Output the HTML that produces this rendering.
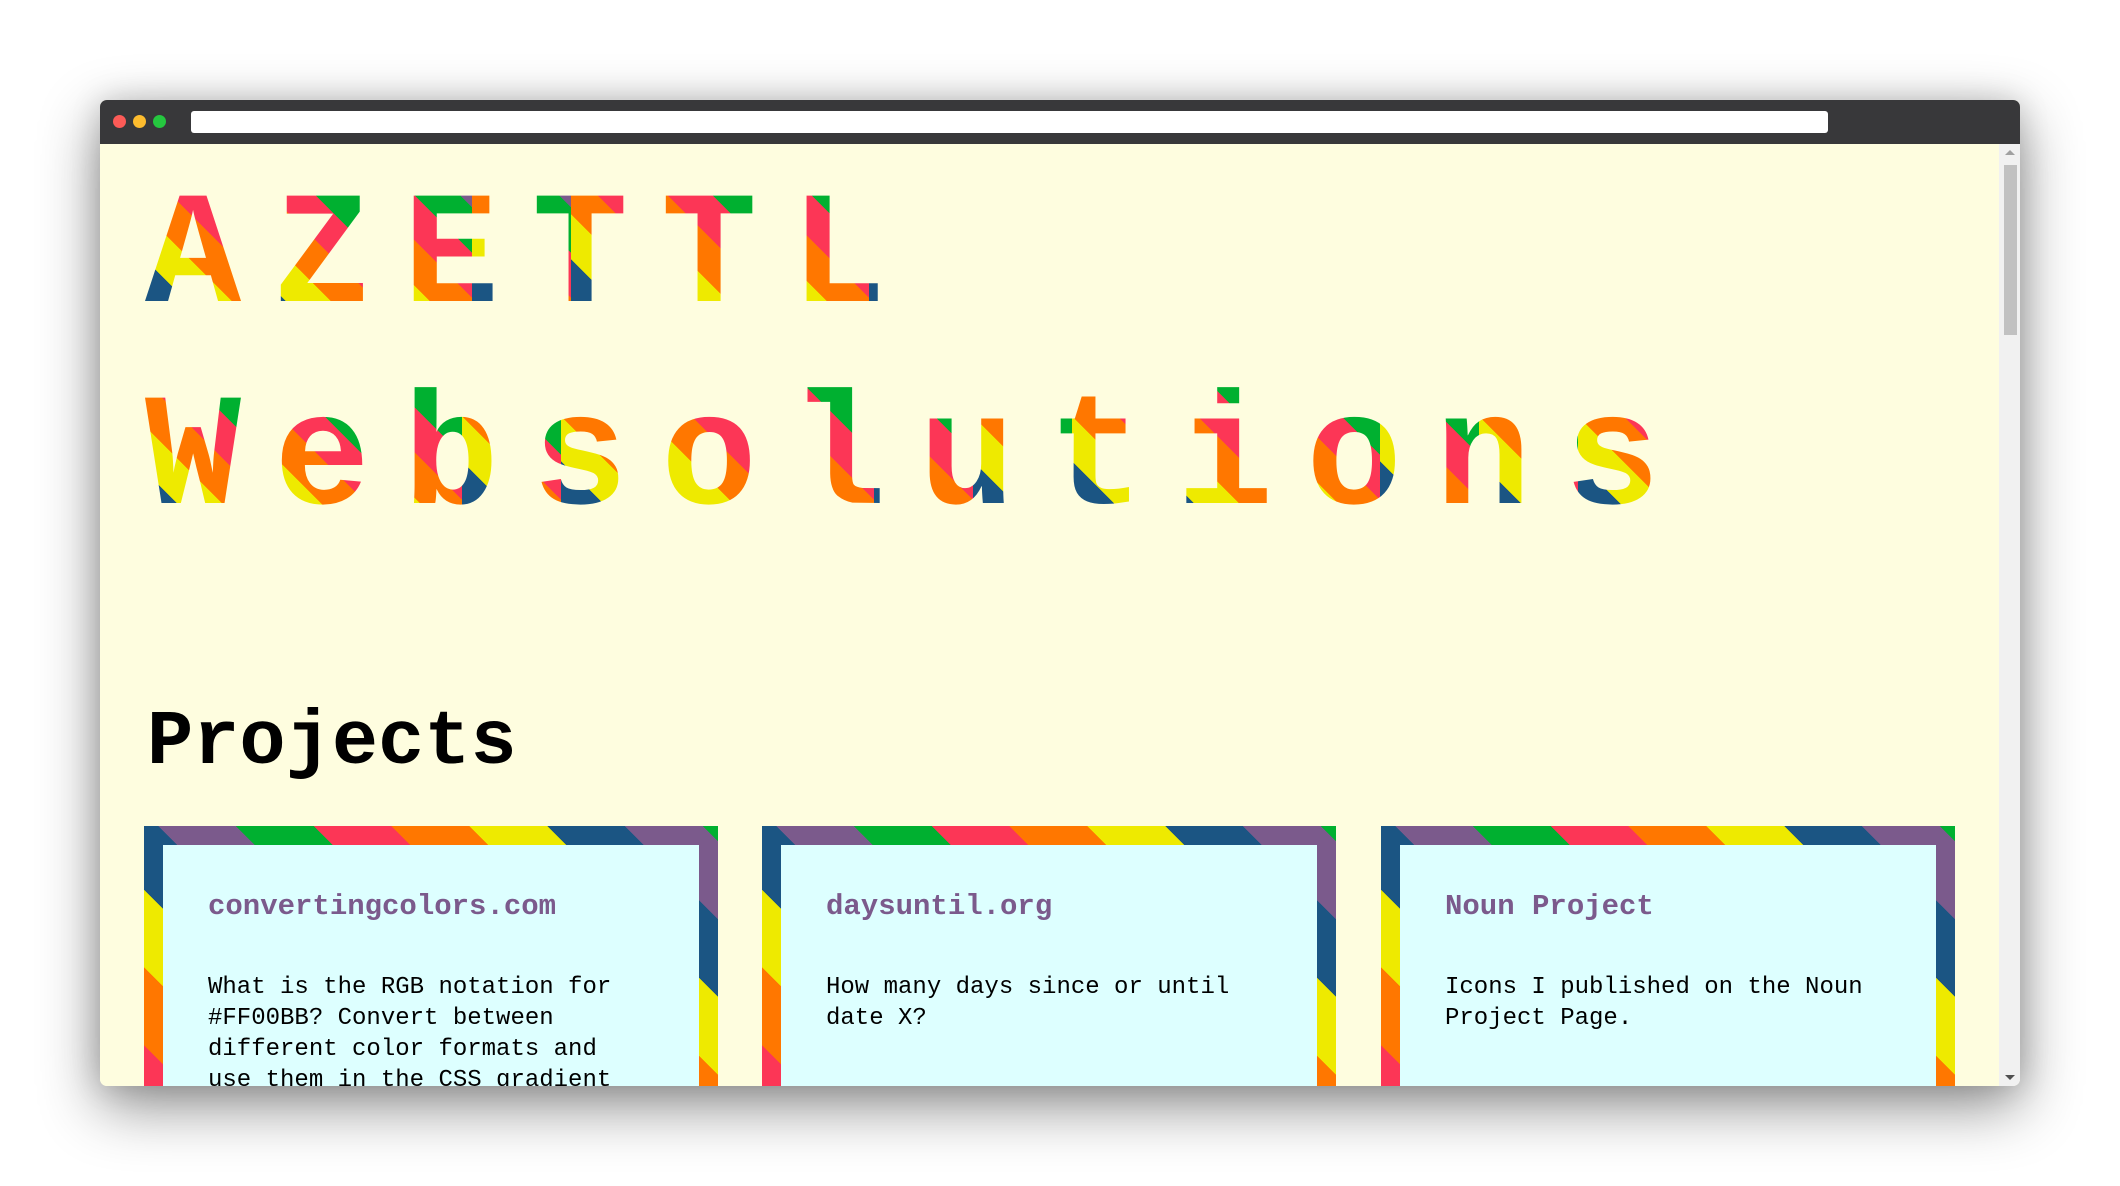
<!DOCTYPE html>
<html><head><meta charset="utf-8">
<style>
html,body{margin:0;padding:0;width:2120px;height:1186px;background:#fff;overflow:hidden;font-family:"Liberation Mono",monospace}
.win{position:absolute;left:100px;top:100px;width:1920px;height:986px;border-radius:7px;overflow:hidden;box-shadow:0 20px 60px rgba(0,0,0,.45),0 0 30px rgba(0,0,0,.15);background:#fefddf}
.bar{position:absolute;left:0;top:0;width:1920px;height:44px;background:#38383a}
.dot{position:absolute;top:15px;width:13px;height:13px;border-radius:50%}
.addr{position:absolute;left:91px;top:11px;width:1637px;height:22px;background:#fff;border-radius:3px}
.content{position:absolute;left:0;top:44px;width:1899px;height:942px;background:#fefddf;overflow:hidden}
.sb{position:absolute;left:1899px;top:44px;width:21px;height:942px;background:#f1f1f1}
.thumb{position:absolute;left:5px;top:21px;width:13px;height:170px;background:#c1c1c1}
.h{position:absolute;left:45px;font-size:160px;font-weight:bold;letter-spacing:33px;white-space:nowrap;line-height:1}
.h span{color:transparent;-webkit-background-clip:text;background-clip:text;
background-image:repeating-linear-gradient(45deg,#7b5a8c 0 32px,#1b5583 32px 64px,#eeea00 64px 96px,#ff7700 96px 128px,#fc3656 128px 160px,#00b030 160px 192px)}
.p{position:absolute;left:47px;top:561px;font-size:77px;font-weight:bold;color:#000;line-height:1}
.card{position:absolute;top:682px;width:536px;height:300px;padding:19px;
background:repeating-linear-gradient(45deg,#fc3656 29px 84px,#ff7700 84px 139px,#eeea00 139px 194px,#1b5583 194px 249px,#7b5a8c 249px 304px,#00b030 304px 359px)}
.in{background:#ddffff;height:100%;padding:40px 45px 0 45px;box-sizing:border-box}
.in h3{margin:0;font-size:29px;color:#7b5a8c;font-weight:bold;line-height:44px}
.in p{margin:43px 0 0;font-size:24px;line-height:31px;color:#000}
</style></head><body>
<div class="win">
 <div class="bar">
  <div class="dot" style="left:13px;background:#fc5b57"></div>
  <div class="dot" style="left:33px;background:#fdbc2e"></div>
  <div class="dot" style="left:53px;background:#25c73f"></div>
  <div class="addr"></div>
 </div>
 <div class="content">
  <div class="h" style="top:36px">
   <span style="background-position:0 0">A</span><span style="background-position:-30px 0">Z</span><span style="background-position:-60px 0">E</span><span style="background-position:-90px 0">T</span><span style="background-position:-20px 0">T</span><span style="background-position:-50px 0">L</span>
  </div>
  <div class="h" style="top:238px">
   <span style="background-position:-10px 0">W</span><span style="background-position:-40px 0">e</span><span style="background-position:-70px 0">b</span><span style="background-position:-100px 0">s</span><span style="background-position:-15px 0">o</span><span style="background-position:-45px 0">l</span><span style="background-position:-75px 0">u</span><span style="background-position:-105px 0">t</span><span style="background-position:-25px 0">i</span><span style="background-position:-55px 0">o</span><span style="background-position:-85px 0">n</span><span style="background-position:-115px 0">s</span>
  </div>
  <div class="p">Projects</div>
  <div class="card" style="left:44px"><div class="in"><h3>convertingcolors.com</h3><p>What is the RGB notation for #FF00BB? Convert between different color formats and use them in the CSS gradient</p></div></div>
  <div class="card" style="left:662px"><div class="in"><h3>daysuntil.org</h3><p>How many days since or until date X?</p></div></div>
  <div class="card" style="left:1281px"><div class="in"><h3>Noun Project</h3><p>Icons I published on the Noun Project Page.</p></div></div>
 </div>
 <div class="sb"><div class="thumb"></div>
  <div style="position:absolute;left:6px;top:6px;width:0;height:0;border-left:5px solid transparent;border-right:5px solid transparent;border-bottom:5px solid #a0a0a0"></div>
  <div style="position:absolute;left:6px;bottom:6px;width:0;height:0;border-left:5px solid transparent;border-right:5px solid transparent;border-top:5px solid #505050"></div>
 </div>
</div>
</body></html>
